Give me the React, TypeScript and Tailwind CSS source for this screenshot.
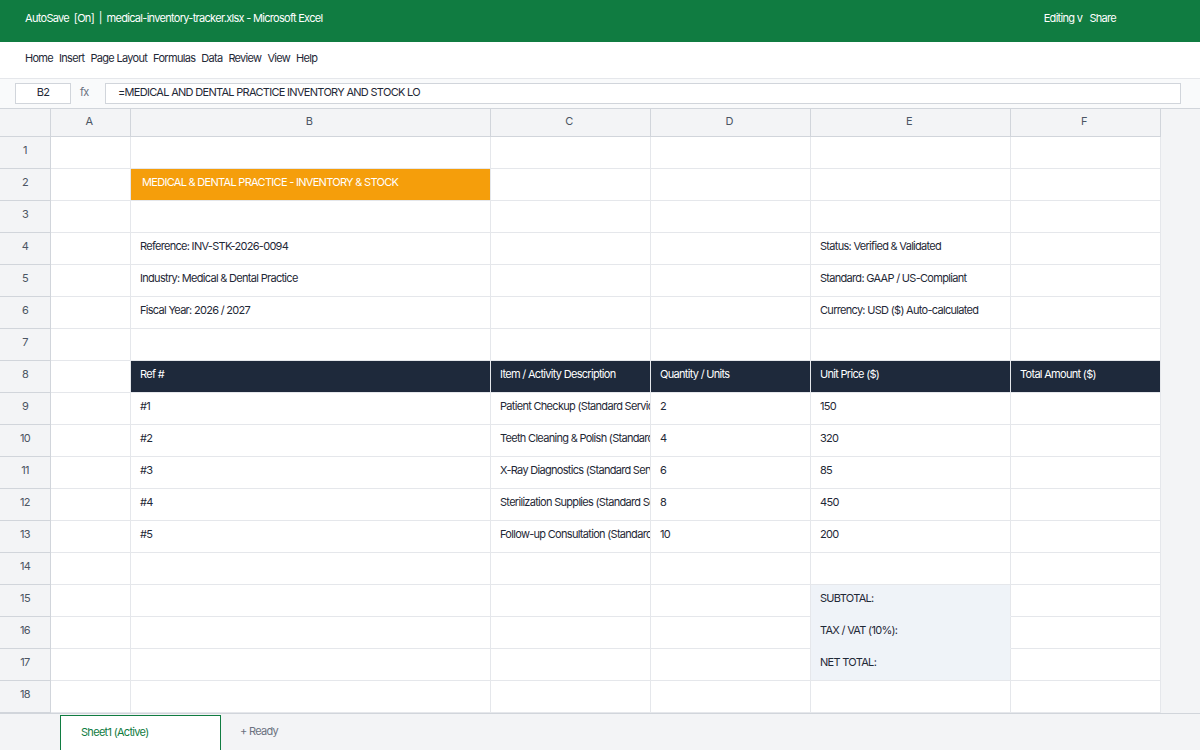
import React from "react";

const COLS = ["A", "B", "C", "D", "E", "F"];
const COL_W = ["w-[80px]", "w-[360px]", "w-[160px]", "w-[160px]", "w-[200px]", "w-[150px]"];

type Cell = { text?: string; cls?: string };

const DARK = "bg-[#1e293b] text-white border-[#1e293b]";
const TOTAL = "bg-[#eff3f8] border-b-[#eff3f8]";

// row number -> cells A..F
const ROWS: Record<number, Cell[]> = {
  2: [{}, { text: "MEDICAL & DENTAL PRACTICE - INVENTORY & STOCK", cls: "bg-[#f59e0b] text-white pl-[11px]" }],
  4: [{}, { text: "Reference: INV-STK-2026-0094" }, {}, {}, { text: "Status: Verified & Validated" }],
  5: [{}, { text: "Industry: Medical & Dental Practice" }, {}, {}, { text: "Standard: GAAP / US-Compliant" }],
  6: [{}, { text: "Fiscal Year: 2026 / 2027" }, {}, {}, { text: "Currency: USD ($) Auto-calculated" }],
  8: [
    {},
    { text: "Ref #", cls: DARK },
    { text: "Item / Activity Description", cls: DARK },
    { text: "Quantity / Units", cls: DARK },
    { text: "Unit Price ($)", cls: DARK },
    { text: "Total Amount ($)", cls: DARK },
  ],
  9: [{}, { text: "#1" }, { text: "Patient Checkup (Standard Service)" }, { text: "2" }, { text: "150" }],
  10: [{}, { text: "#2" }, { text: "Teeth Cleaning & Polish (Standard Service)" }, { text: "4" }, { text: "320" }],
  11: [{}, { text: "#3" }, { text: "X-Ray Diagnostics (Standard Service)" }, { text: "6" }, { text: "85" }],
  12: [{}, { text: "#4" }, { text: "Sterilization Supplies (Standard Service)" }, { text: "8" }, { text: "450" }],
  13: [{}, { text: "#5" }, { text: "Follow-up Consultation (Standard Service)" }, { text: "10" }, { text: "200" }],
  15: [{}, {}, {}, {}, { text: "SUBTOTAL:", cls: TOTAL }],
  16: [{}, {}, {}, {}, { text: "TAX / VAT (10%):", cls: TOTAL }],
  17: [{}, {}, {}, {}, { text: "NET TOTAL:", cls: "bg-[#eff3f8]" }],
};

const MENU = ["Home", "Insert", "Page Layout", "Formulas", "Data", "Review", "View", "Help"];

export default function App() {
  const rows = Array.from({ length: 18 }, (_, i) => i + 1);

  return (
    <div className="w-[1200px] h-[750px] overflow-hidden bg-white flex flex-col text-[11px] tracking-[-0.7px] text-[#1f2937] font-['Inter','Liberation_Sans',sans-serif]">
      {/* Title bar */}
      <div className="h-[42px] shrink-0 bg-[#107c41] text-white flex items-center justify-between pl-[25px] pr-[84px] pb-[6px]">
        <span className="whitespace-pre">AutoSave  [On]  |  medical-inventory-tracker.xlsx - Microsoft Excel</span>
        <span className="whitespace-pre">Editing v   Share</span>
      </div>

      {/* Ribbon menu */}
      <div className="h-[37px] shrink-0 flex items-center gap-[6px] pl-[25px] pb-[4px] border-b border-[#e5e7eb]">
        {MENU.map((m) => (
          <span key={m}>{m}</span>
        ))}
      </div>

      {/* Formula bar */}
      <div className="h-[29px] shrink-0 flex items-center bg-[#f9fafb] pl-[15px] pr-[19px]">
        <div className="w-[56px] h-[21px] border border-[#d1d5db] bg-white flex items-center justify-center pb-[3px]">B2</div>
        <span className="w-[34px] pl-[9px] text-[#6b7280] pb-[3px]">fx</span>
        <div className="flex-1 h-[21px] border border-[#d1d5db] bg-white flex items-center px-[12px] pb-[3px]">
          =MEDICAL AND DENTAL PRACTICE INVENTORY AND STOCK LO
        </div>
      </div>

      {/* Grid */}
      <div className="flex-1 bg-[#f3f4f6] border-t border-[#d1d5db]">
        <div className="flex h-[28px]">
          <div className="w-[51px] shrink-0 bg-[#f3f4f6] border-r border-b border-[#d1d5db]" />
          {COLS.map((c, i) => (
            <div
              key={c}
              className={`${COL_W[i]} shrink-0 bg-[#f3f4f6] border-r border-b border-[#d1d5db] flex items-center justify-center pb-[2px] pr-[3px] text-[#4b5563]`}
            >
              {c}
            </div>
          ))}
        </div>
        {rows.map((r) => (
          <div key={r} className="flex h-[32px]">
            <div className="w-[51px] shrink-0 bg-[#f3f4f6] border-r border-b border-[#d1d5db] flex items-center justify-center pb-[4px] text-[#4b5563]">
              {r}
            </div>
            {COLS.map((c, i) => {
              const cell = ROWS[r]?.[i] ?? {};
              return (
                <div
                  key={c}
                  className={`${COL_W[i]} shrink-0 border-r border-b border-[#e5e7eb] flex items-center pl-[9px] pb-[4px] overflow-hidden whitespace-nowrap ${cell.cls ?? "bg-white"}`}
                >
                  {cell.text}
                </div>
              );
            })}
          </div>
        ))}
      </div>

      {/* Sheet tabs */}
      <div className="h-[37px] shrink-0 bg-[#f3f4f6] border-t border-[#d1d5db] flex items-end pl-[60px]">
        <div className="w-[161px] h-[35px] bg-white border border-b-0 border-[#107c41] text-[#107c41] flex items-center pl-[20px] pb-[2px]">
          Sheet1 (Active)
        </div>
        <span className="h-[35px] flex items-center pl-[19px] pb-[2px] text-[#6b7280]">+ Ready</span>
      </div>
    </div>
  );
}
